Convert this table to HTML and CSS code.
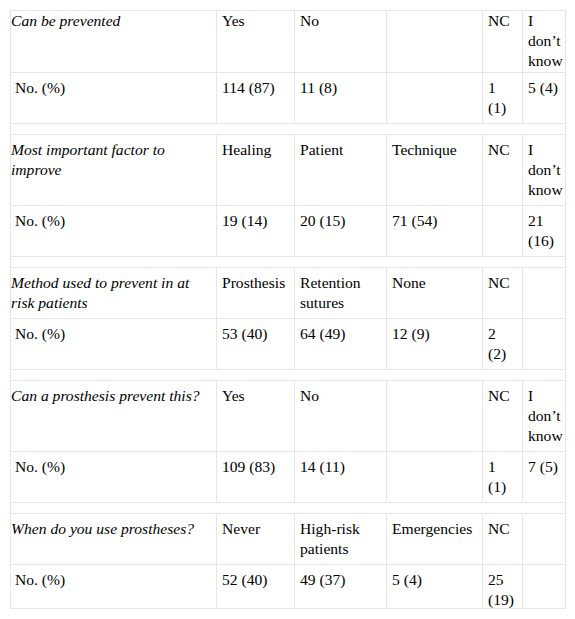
FILE: index.html
```html
<!DOCTYPE html>
<html lang="en">
<head>
<meta charset="utf-8">
<title>Survey results</title>
<link rel="stylesheet" href="styles.css">
</head>
<body>
<div class="table-wrap">
  <table class="data">
    <colgroup>
      <col class="c1"><col class="c2"><col class="c3"><col class="c4"><col class="c5"><col class="c6">
    </colgroup>
    <tbody>
      <tr class="first"><td><em>Can be prevented</em></td><td>Yes</td><td>No</td><td></td><td>NC</td><td>I don’t know</td></tr>
      <tr><td>&nbsp;No. (%)</td><td>114 (87)</td><td>11 (8)</td><td></td><td>1 (1)</td><td>5 (4)</td></tr>
      <tr class="gap"><td colspan="6"></td></tr>
      <tr><td><em>Most important factor to improve</em></td><td>Healing</td><td>Patient</td><td>Technique</td><td>NC</td><td>I don’t know</td></tr>
      <tr><td>&nbsp;No. (%)</td><td>19 (14)</td><td>20 (15)</td><td>71 (54)</td><td></td><td>21 (16)</td></tr>
      <tr class="gap"><td colspan="6"></td></tr>
      <tr><td><em>Method used to prevent in at risk patients</em></td><td>Prosthesis</td><td>Retention sutures</td><td>None</td><td>NC</td><td></td></tr>
      <tr><td>&nbsp;No. (%)</td><td>53 (40)</td><td>64 (49)</td><td>12 (9)</td><td>2 (2)</td><td></td></tr>
      <tr class="gap"><td colspan="6"></td></tr>
      <tr><td><em>Can a prosthesis prevent this?</em></td><td>Yes</td><td>No</td><td></td><td>NC</td><td>I don’t know</td></tr>
      <tr><td>&nbsp;No. (%)</td><td>109 (83)</td><td>14 (11)</td><td></td><td>1 (1)</td><td>7 (5)</td></tr>
      <tr class="gap"><td colspan="6"></td></tr>
      <tr><td><em>When do you use prostheses?</em></td><td>Never</td><td>High-risk patients</td><td>Emergencies</td><td>NC</td><td></td></tr>
      <tr><td>&nbsp;No. (%)</td><td>52 (40)</td><td>49 (37)</td><td>5 (4)</td><td>25 (19)</td><td></td></tr>
    </tbody>
  </table>
</div>
</body>
</html>
```
FILE: styles.css
```css
html, body {
  margin: 0;
  padding: 0;
  background: #ffffff;
}

body {
  font-family: "Liberation Serif", Tinos, "Times New Roman", Times, serif;
  font-size: 15.6px;
  line-height: 20px;
  color: #000000;
}

.table-wrap {
  margin: 10px 0 0 10px;
  width: 554px;
  height: 597px;
  overflow: hidden;
  border: 1px solid #e6e6e6;
}

.data {
  border-collapse: collapse;
  table-layout: fixed;
  width: 562px;
  margin: -1px 0 0 -6px;
}

.c1 { width: 211px; }
.c2 { width: 78px; }
.c3 { width: 92px; }
.c4 { width: 96px; }
.c5 { width: 40px; }
.c6 { width: 44px; }

.data td {
  border: 1px solid #e6e6e6;
  padding: 5px;
  vertical-align: top;
  text-align: left;
}

.data .first td {
  padding-top: 0;
  padding-bottom: 1px;
}

.data em {
  font-style: italic;
}
```
